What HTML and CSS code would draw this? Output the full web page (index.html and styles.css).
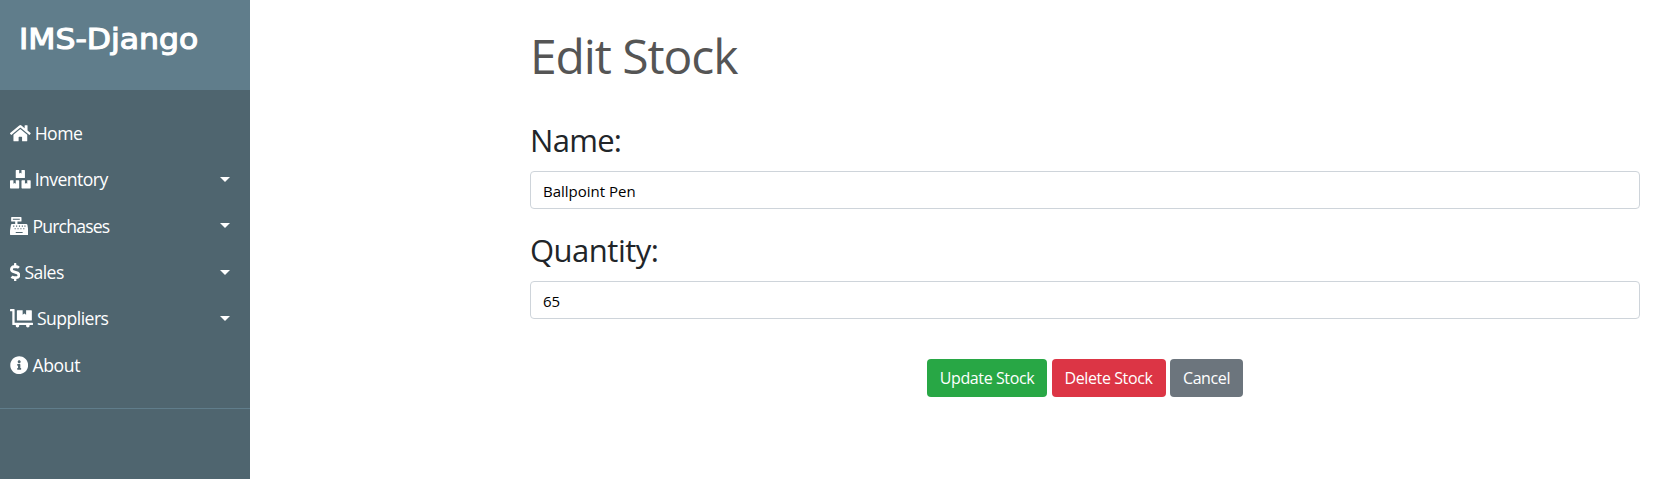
FILE: index.html
```html
<!DOCTYPE html>
<html lang="en">
<head>
<meta charset="utf-8">
<title>Edit Stock</title>
<link rel="stylesheet" href="styles.css">
</head>
<body>
<div class="wrapper">
  <nav class="sidebar">
    <div class="brand"><span class="brand-name">IMS-Django</span></div>
    <ul class="menu">
      <li class="item"><svg class="icon w576" viewBox="0 0 576 512"><path d="M280.37 148.26L96 300.11V464a16 16 0 0 0 16 16l112.06-.29a16 16 0 0 0 15.92-16V368a16 16 0 0 1 16-16h64a16 16 0 0 1 16 16v95.64a16 16 0 0 0 16 16.05L464 480a16 16 0 0 0 16-16V300L295.67 148.26a12.19 12.19 0 0 0-15.3 0zM571.6 251.47L488 182.56V44.05a12 12 0 0 0-12-12h-56a12 12 0 0 0-12 12v72.61L318.47 43a48 48 0 0 0-61 0L4.34 251.47a12 12 0 0 0-1.6 16.9l25.5 31A12 12 0 0 0 45.15 301l235.22-193.74a12.19 12.19 0 0 1 15.3 0L530.9 301a12 12 0 0 0 16.9-1.6l25.5-31a12 12 0 0 0-1.7-16.93z"/></svg><span class="label home">Home</span></li>
      <li class="item"><svg class="icon w576" viewBox="0 0 576 512"><path d="M560 288h-80v96l-32-21.3-32 21.3v-96h-80c-8.8 0-16 7.2-16 16v192c0 8.8 7.2 16 16 16h224c8.8 0 16-7.2 16-16V304c0-8.8-7.2-16-16-16zm-384-64h224c8.8 0 16-7.2 16-16V16c0-8.8-7.2-16-16-16h-80v96l-32-21.3L256 96V0h-80c-8.8 0-16 7.2-16 16v192c0 8.8 7.2 16 16 16zm64 64h-80v96l-32-21.3L96 384v-96H16c-8.8 0-16 7.2-16 16v192c0 8.8 7.2 16 16 16h224c8.8 0 16-7.2 16-16V304c0-8.8-7.2-16-16-16z"/></svg><span class="label inventory">Inventory</span><i class="caret"></i></li>
      <li class="item"><svg class="icon w512" viewBox="0 0 512 512"><path fill-rule="evenodd" d="M511.1 378.8l-26.7-160c-2.6-15.4-15.9-26.7-31.6-26.7H208v-64h96c8.8 0 16-7.2 16-16V16c0-8.8-7.2-16-16-16H48c-8.8 0-16 7.2-16 16v96c0 8.8 7.2 16 16 16h96v64H59.1c-15.6 0-29 11.3-31.6 26.7L.8 378.7c-.6 3.5-.9 7-.9 10.5V480c0 17.7 14.3 32 32 32h448c17.7 0 32-14.3 32-32v-90.7c.1-3.5-.2-7-.8-10.5zM80 48h192v32H80zM88 240h32v32H88zM168 240h32v32h-32zM248 240h32v32h-32zM328 240h32v32h-32zM400 240h32v32h-32zM128 312h32v32h-32zM208 312h32v32h-32zM288 312h32v32h-32zM368 312h32v32h-32zM160 416h192v32H160z"/></svg><span class="label purchases">Purchases</span><i class="caret"></i></li>
      <li class="item"><svg class="icon w288" viewBox="0 0 288 512"><path d="M209.2 233.4l-108-31.6C88.7 198.2 80 186.5 80 173.5c0-16.3 13.2-29.5 29.5-29.5h66.3c12.2 0 24.2 3.7 34.2 10.5 6.1 4.1 14.3 3.1 19.5-2l34.8-34c7.1-6.9 6.1-18.4-1.8-24.5C238 74.8 207.4 64.1 176 64V16c0-8.8-7.2-16-16-16h-32c-8.8 0-16 7.2-16 16v48h-2.5C45.8 64-5.4 118.7.5 183.6c4.2 46.1 39.4 83.6 83.8 96.6l102.5 30c12.5 3.7 21.2 15.3 21.2 28.3 0 16.3-13.2 29.5-29.5 29.5h-66.3C100 368 88 364.3 78 357.5c-6.1-4.1-14.3-3.1-19.5 2l-34.8 34c-7.1 6.9-6.1 18.4 1.8 24.5 24.5 19.2 55.1 29.9 86.5 30v48c0 8.8 7.2 16 16 16h32c8.8 0 16-7.2 16-16v-48.2c46.6-.9 90.3-28.6 105.7-72.7 21.5-61.6-14.6-124.8-72.5-141.7z"/></svg><span class="label sales">Sales</span><i class="caret"></i></li>
      <li class="item"><svg class="icon w640" viewBox="0 0 640 512"><path d="M208 320h384c8.8 0 16-7.2 16-16V48c0-8.8-7.2-16-16-16H448v128l-48-32-48 32V32H208c-8.8 0-16 7.2-16 16v256c0 8.8 7.2 16 16 16zm416 64H128V16c0-8.8-7.2-16-16-16H16C7.2 0 0 7.2 0 16v32c0 8.8 7.2 16 16 16h48v368c0 8.8 7.2 16 16 16h82.9c-1.8 5-2.9 10.4-2.9 16 0 26.5 21.5 48 48 48s48-21.5 48-48c0-5.6-1.2-11-2.9-16H451c-1.8 5-2.9 10.4-2.9 16 0 26.5 21.5 48 48 48s48-21.5 48-48c0-5.6-1.2-11-2.9-16H624c8.8 0 16-7.2 16-16v-32c0-8.8-7.2-16-16-16z"/></svg><span class="label suppliers">Suppliers</span><i class="caret"></i></li>
      <li class="item"><svg class="icon w512" viewBox="0 0 512 512"><path d="M256 8C119.043 8 8 119.083 8 256c0 136.997 111.043 248 248 248s248-111.003 248-248C504 119.083 392.957 8 256 8zm0 110c23.196 0 42 18.804 42 42s-18.804 42-42 42-42-18.804-42-42 18.804-42 42-42zm56 254c0 6.627-5.373 12-12 12h-88c-6.627 0-12-5.373-12-12v-24c0-6.627 5.373-12 12-12h12v-64h-12c-6.627 0-12-5.373-12-12v-24c0-6.627 5.373-12 12-12h64c6.627 0 12 5.373 12 12v100h12c6.627 0 12 5.373 12 12v24z"/></svg><span class="label about">About</span></li>
    </ul>
  </nav>
  <main class="content">
    <h1 class="title">Edit Stock</h1>
    <form class="form">
      <label class="field-label name" for="name">Name:</label>
      <input class="control" id="name" type="text" value="Ballpoint Pen">
      <label class="field-label quantity" for="quantity">Quantity:</label>
      <input class="control digits" id="quantity" type="text" value="65">
      <div class="actions">
        <button class="btn update" type="button">Update Stock</button>
        <button class="btn delete" type="button">Delete Stock</button>
        <button class="btn cancel" type="button">Cancel</button>
      </div>
    </form>
  </main>
</div>
</body>
</html>
```
FILE: styles.css
```css
* { box-sizing: border-box; }
body {
  margin: 0;
  background: #fff;
  font-family: "Open Sans", "Noto Sans", sans-serif;
  font-size: 16px;
  line-height: 1.5;
}
.wrapper { display: flex; height: 479px; overflow: hidden; }

/* Sidebar */
.sidebar { width: 250px; flex: none; background: #4f656f; color: #fff; }
.brand { height: 90px; padding: 20px 19px; background: #607d8b; }
.brand-name {
  display: block;
  font: 400 27.5px/38px "DejaVu Sans", sans-serif;
  letter-spacing: 0;
  transform: scaleX(1.145);
  transform-origin: left;
  -webkit-text-stroke: 1.1px #fff;
  white-space: nowrap;
}
.menu {
  margin: 0;
  padding: 20px 0 20.3px;
  list-style: none;
  border-bottom: 1px solid #607d8b;
}
.item {
  display: flex;
  align-items: center;
  height: 46.35px;
  padding: 0 20px 0 10px;
  font-size: 17.6px;
}
.icon { height: 18.4px; flex: none; fill: currentColor; }
.w576 { width: 20.7px; }
.w512 { width: 18.4px; }
.w288 { width: 10.4px; }
.w640 { width: 23px; }
.label { margin-left: 4px; letter-spacing: -0.55px; }
.purchases { letter-spacing: -0.8px; }
.about { letter-spacing: -0.35px; }
.caret {
  margin-left: auto;
  border: 5.28px solid transparent;
  border-top-color: #fff;
  border-bottom: 0;
}

/* Main form */
.content { flex: 1; padding: 27px 37px 0 280px; }
.title {
  margin: 0;
  color: #555;
  font-size: 48px;
  font-weight: 400;
  line-height: 58px;
  letter-spacing: -1.1px;
}
.form { display: flex; flex-direction: column; margin-top: 36px; }
.field-label {
  height: 38px;
  margin-bottom: 12px;
  color: #212529;
  font-size: 31px;
  line-height: 38px;
  letter-spacing: -0.7px;
}
.quantity { letter-spacing: -0.5px; }
.control {
  height: 38px;
  margin: 0 0 22px;
  padding: 7px 12px 5px;
  border: 1px solid #ced4da;
  border-radius: 4px;
  color: #000;
  font: 15px/24px "Open Sans", "Noto Sans", sans-serif;
  letter-spacing: 0;
}
.actions { display: flex; justify-content: center; gap: 4.5px; margin-top: 18px; }
.btn {
  height: 38px;
  padding: 0;
  border: 0;
  border-radius: 4px;
  color: #fff;
  font: 16px/24px "Open Sans", "Noto Sans", sans-serif;
  letter-spacing: -0.4px;
}
.update { width: 120px; background: #28a745; }
.delete { width: 114px; background: #dc3545; }
.cancel { width: 73px; background: #6c757d; }
```
